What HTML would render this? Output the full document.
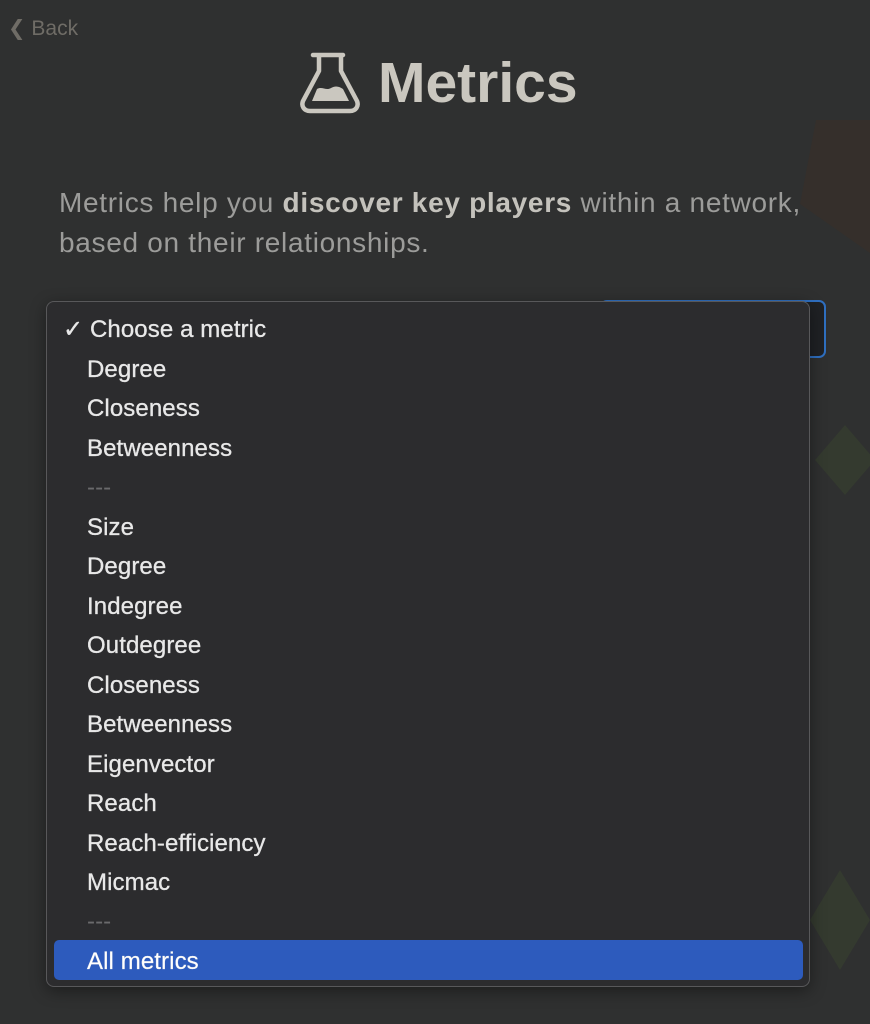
<!DOCTYPE html>
<html><head><meta charset="utf-8"><style>
body{margin:0;width:870px;height:1024px;background:#2f3030;font-family:"Liberation Sans",sans-serif;overflow:hidden;position:relative}
.back{position:absolute;left:8px;top:16px;color:#6f6c66;font-size:21px}
.title{position:absolute;left:378px;top:50px;color:#cac7bf;font-size:57px;font-weight:bold}
.desc{position:absolute;left:59px;top:183px;color:#9c9c9a;font-size:28px;line-height:40px;width:800px;letter-spacing:0.7px;white-space:nowrap}
.desc b{color:#c4c2bc}
.sel{position:absolute;left:600px;top:300px;width:222px;height:54px;border:2px solid #2f6fc0;border-radius:7px;background:#1f2124}
.menu{position:absolute;left:46px;top:301px;width:762px;height:684px;background:#2c2c2e;border:1px solid #58585a;border-radius:8px;box-shadow:0 4px 16px rgba(0,0,0,.4)}
.it{position:absolute;left:40px;color:#e8e8e8;font-size:24px;line-height:24px;letter-spacing:0.1px;-webkit-text-stroke:0.3px #e8e8e8}
.sep{color:#6a6a6c;-webkit-text-stroke:0}
.hl{position:absolute;left:7px;top:638px;width:749px;height:40px;background:#2d5bbd;border-radius:5px}
.bg1{position:absolute;left:800px;top:120px;width:80px;height:140px;background:#352f2b;clip-path:polygon(20% 0,100% 0,100% 100%,0 60%)}
.bg2{position:absolute;left:815px;top:425px;width:60px;height:70px;background:#343a2f;clip-path:polygon(50% 0,100% 50%,50% 100%,0 50%)}
.bg3{position:absolute;left:810px;top:870px;width:60px;height:100px;background:#343a2f;clip-path:polygon(50% 0,100% 50%,50% 100%,0 50%)}
</style></head><body>
<div class="bg1"></div><div class="bg2"></div><div class="bg3"></div>
<div class="back">&#10094; Back</div>
<svg style="position:absolute;left:300px;top:52px" width="62" height="62" viewBox="0 0 62 62">
<path d="M13 3h30M19 3v16L3 49c-2 5 1 10 7 10h40c6 0 9-5 7-10L41 19V3" fill="none" stroke="#cac7bf" stroke-width="4.5" stroke-linejoin="round" stroke-linecap="round"/>
<path d="M12 49l5-12c5-3 9 2 14-1 5-3 9-1 12 1l6 12z" fill="#cac7bf"/>
</svg>
<div class="title">Metrics</div>
<div class="desc">Metrics help you <b>discover key players</b> within a network,<br>based on their relationships.</div>
<div class="sel"></div>
<div class="menu">
<div class="hl"></div>
<div class="it" style="left:16px;top:16px">✓ Choose a metric</div>
<div class="it" style="top:56px">Degree</div>
<div class="it" style="top:95px">Closeness</div>
<div class="it" style="top:135px">Betweenness</div>
<div class="it sep" style="top:174px">---</div>
<div class="it" style="top:214px">Size</div>
<div class="it" style="top:253px">Degree</div>
<div class="it" style="top:293px">Indegree</div>
<div class="it" style="top:332px">Outdegree</div>
<div class="it" style="top:372px">Closeness</div>
<div class="it" style="top:411px">Betweenness</div>
<div class="it" style="top:451px">Eigenvector</div>
<div class="it" style="top:490px">Reach</div>
<div class="it" style="top:530px">Reach-efficiency</div>
<div class="it" style="top:569px">Micmac</div>
<div class="it sep" style="top:608px">---</div>
<div class="it" style="top:648px;color:#fff">All metrics</div>
</div>
</body></html>
